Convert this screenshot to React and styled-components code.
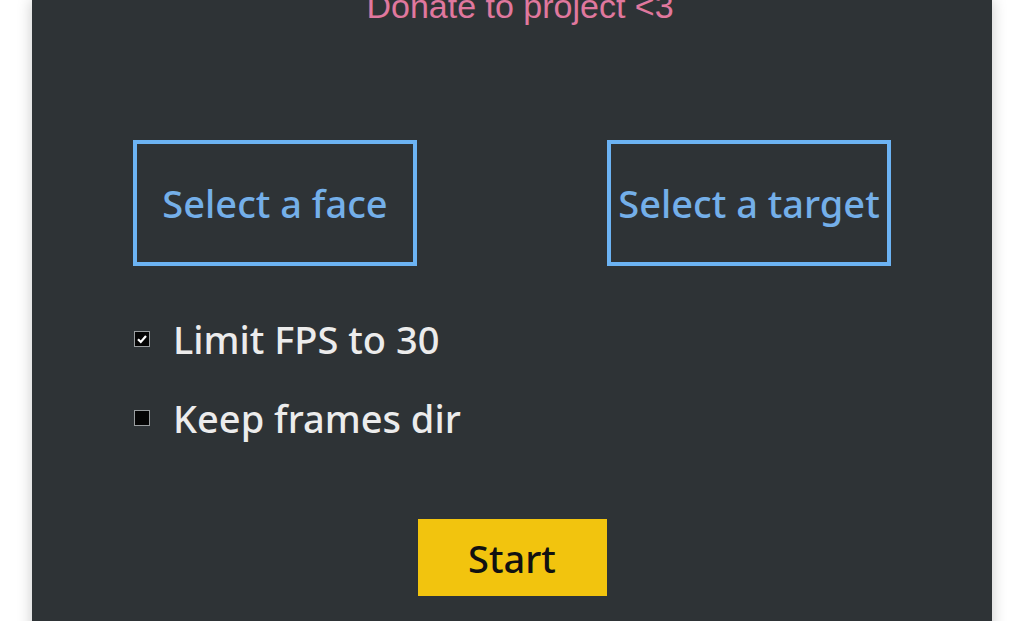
import React from "react";
import styled, { createGlobalStyle } from "styled-components";

const Global = createGlobalStyle`
  html, body { margin: 0; padding: 0; background: #ffffff; }
  body { overflow: hidden; font-family: "Noto Sans", "Open Sans", sans-serif; }
`;

const Page = styled.div`
  display: flex;
  justify-content: center;
  height: 621px;
  overflow: hidden;
`;

const Panel = styled.main`
  width: 960px;
  min-height: 700px;
  box-sizing: border-box;
  padding: 0 101px;
  background: #2e3336;
  box-shadow: 0 0 14px rgba(0, 0, 0, 0.22);
  display: flex;
  flex-direction: column;
`;

const Donate = styled.a`
  display: block;
  margin-top: -13px;
  padding-left: 16px;
  text-align: center;
  font-family: "Liberation Sans", Arial, sans-serif;
  font-size: 34px;
  line-height: 38px;
  color: #e0789e;
  text-decoration: none;
`;

const BoxRow = styled.div`
  display: flex;
  justify-content: space-between;
  margin-top: 115px;
`;

const SelectBox = styled.div`
  width: 284px;
  height: 126px;
  box-sizing: border-box;
  border: 4px solid #6cb3f3;
  display: flex;
  align-items: center;
  justify-content: center;
  font-size: 38px;
  font-weight: 500;
  color: #74afe9;
  white-space: nowrap;
`;

const Options = styled.div`
  display: flex;
  flex-direction: column;
  gap: 29px;
  margin-top: 48px;
`;

const OptionRow = styled.label`
  display: flex;
  align-items: center;
  gap: 23px;
  height: 50px;
  font-size: 38px;
  font-weight: 500;
  color: #ececec;
`;

const Check = styled.span`
  width: 16px;
  height: 16px;
  box-sizing: border-box;
  margin-left: 1px;
  background: #050505;
  border: 1px solid #9a9ea0;
  display: flex;
  align-items: center;
  justify-content: center;
`;

const StartButton = styled.button`
  align-self: center;
  margin-top: 76px;
  width: 189px;
  height: 77px;
  border: none;
  background: #f2c40e;
  color: #111;
  font-family: "Noto Sans", "Open Sans", sans-serif;
  font-size: 38px;
  font-weight: 500;
  padding: 0;
`;

function Checkbox({ checked }) {
  return (
    <Check>
      {checked && (
        <svg width="12" height="12" viewBox="0 0 12 12">
          <path d="M2 6.2 L4.8 9 L10 3" fill="none" stroke="#fff" strokeWidth="2.2" />
        </svg>
      )}
    </Check>
  );
}

export default function App() {
  return (
    <>
      <Global />
      <Page>
        <Panel>
          <Donate href="#">Donate to project &lt;3</Donate>
          <BoxRow>
            <SelectBox>Select a face</SelectBox>
            <SelectBox>Select a target</SelectBox>
          </BoxRow>
          <Options>
            <OptionRow>
              <Checkbox checked />
              Limit FPS to 30
            </OptionRow>
            <OptionRow>
              <Checkbox />
              Keep frames dir
            </OptionRow>
          </Options>
          <StartButton>Start</StartButton>
        </Panel>
      </Page>
    </>
  );
}
